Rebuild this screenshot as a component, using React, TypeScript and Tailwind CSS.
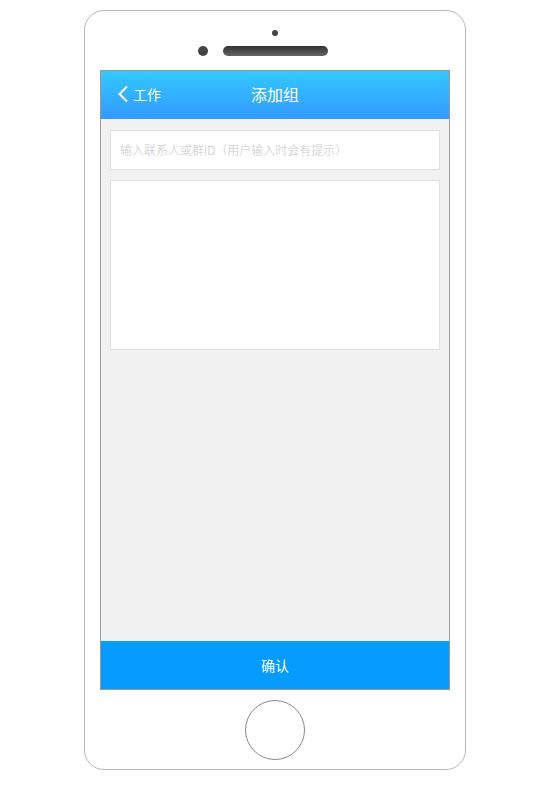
export default function App() {
  return (
    <div className="w-[550px] h-[790px] bg-white pt-[10px] font-['Noto_Sans_CJK_SC',sans-serif]">
      <div className="ml-[84px] w-[382px] h-[760px] border border-[#b8b8b8] rounded-[20px] flex flex-col items-center">
        {/* top sensors */}
        <div className="mt-[19px] w-[6px] h-[6px] rounded-full bg-[#444]" />
        <div className="self-start ml-[113px] mt-[10px] flex items-center gap-[15px]">
          <div className="w-[10px] h-[10px] rounded-full bg-[#444]" />
          <div className="w-[105px] h-[10px] rounded-full bg-gradient-to-b from-[#333] to-[#666]" />
        </div>

        {/* screen */}
        <div className="mt-[14px] w-[350px] h-[620px] border border-[#999] flex flex-col bg-[#f1f1f1]">
          <div className="h-[48px] bg-gradient-to-b from-[#35c8ff] to-[#3399ff] flex items-center relative">
            <div className="flex items-center ml-[16px] text-white text-[14px] -mt-[2px]">
              <svg width="12" height="18" viewBox="0 0 12 18" fill="none">
                <path d="M10 1.5 L2.5 9 L10 16.5" stroke="white" strokeWidth="2" />
              </svg>
              <span className="ml-[4px]">工作</span>
            </div>
            <div className="absolute inset-0 flex items-center justify-center text-white text-[16px] pointer-events-none -mt-[2px]">
              添加组
            </div>
          </div>

          <div className="flex-1 px-[9px] pt-[11px]">
            <div className="h-[40px] bg-white border border-[#e2e2e2] flex items-center px-[9px]">
              <input
                className="w-full outline-none text-[12px] font-light placeholder-[#c8c8c8] bg-transparent"
                placeholder="输入联系人或群ID（用户输入时会有提示）"
              />
            </div>
            <div className="mt-[10px] h-[170px] bg-white border border-[#e2e2e2]" />
          </div>

          <div className="h-[48px] bg-[#069bff] flex items-center justify-center text-white text-[14px]">
            确认
          </div>
        </div>

        {/* home button */}
        <div className="mt-[10px] w-[60px] h-[60px] rounded-full border border-[#888]" />
      </div>
    </div>
  );
}
